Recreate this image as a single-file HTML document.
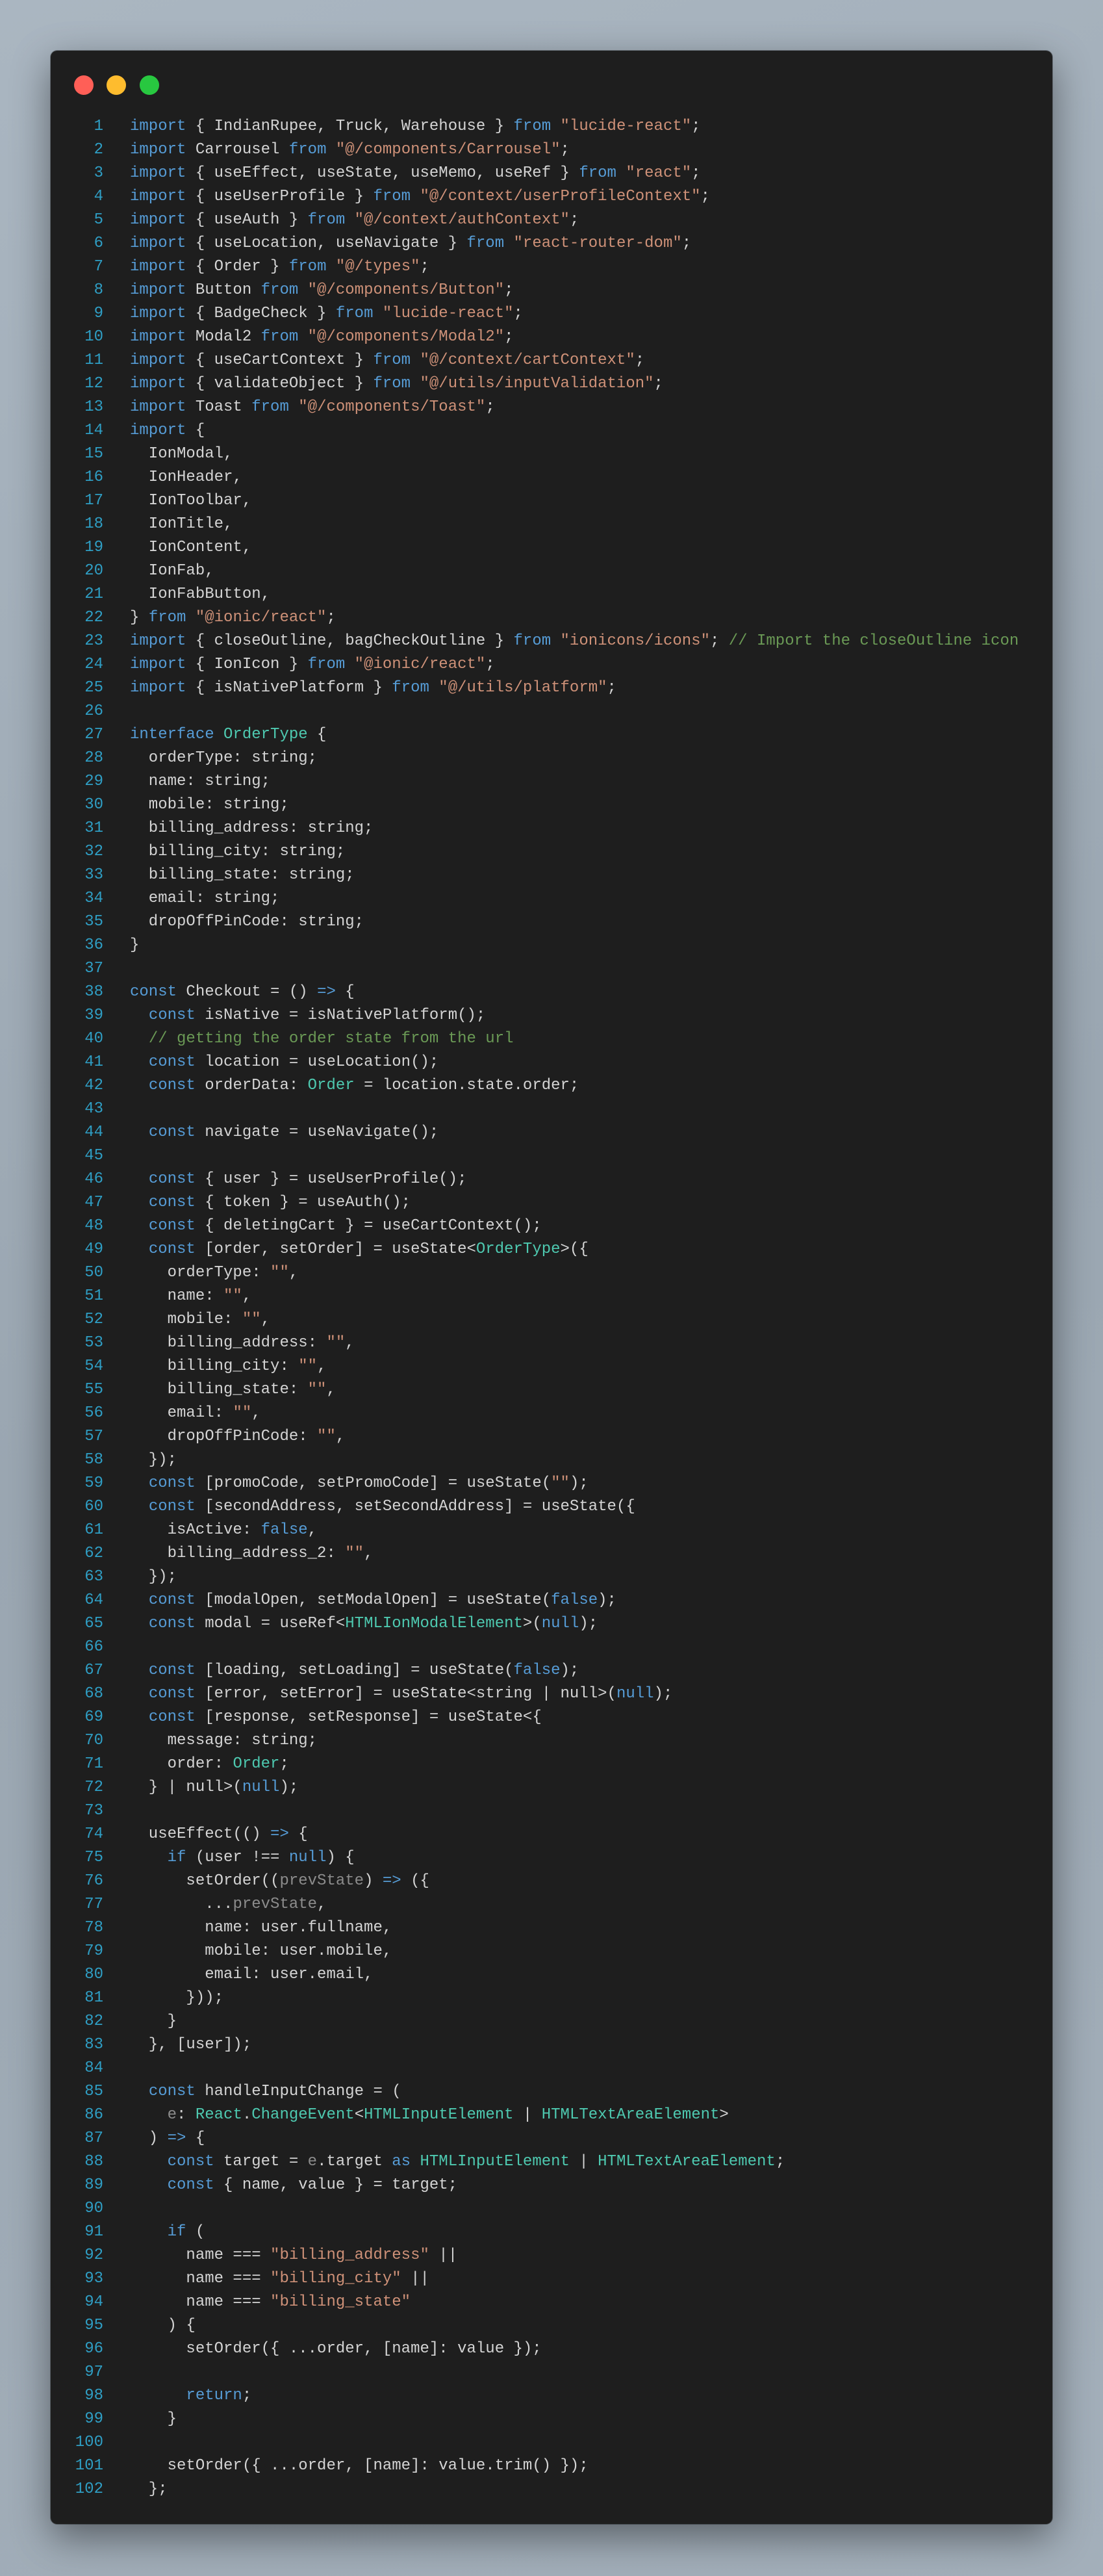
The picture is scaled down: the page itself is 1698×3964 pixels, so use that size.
<!DOCTYPE html>
<html><head><meta charset="utf-8">
<style>
html,body{margin:0;padding:0}
body{width:1698px;height:3964px;background:linear-gradient(160deg,#aab6c1 0%,#9aa6b1 50%,#a3afba 100%);position:relative;overflow:hidden}
.win{position:absolute;left:78px;top:78px;width:1542px;height:3806px;background:#1e1e1e;border-radius:10px;box-shadow:0 20px 60px rgba(0,0,0,0.45),0 0 0 1px rgba(0,0,0,0.3)}
.dot{position:absolute;top:116px;width:30px;height:30px;border-radius:50%}
.code{position:absolute;left:0;top:177px;font-family:"Liberation Mono",monospace;font-size:24px;line-height:36px;color:#d4d4d4}
.l{height:36px;white-space:pre}
.n{display:inline-block;width:159px;text-align:right;color:#2f9ec4;margin-right:41px}
.k{color:#569cd6}.s{color:#ce9178}.c{color:#6a9955}.t{color:#4ec9b0}.p{color:#8c8c8c}
</style></head><body>
<div class="win"></div>
<div class="dot" style="left:114px;background:#ff5f57"></div>
<div class="dot" style="left:164px;background:#febc2e"></div>
<div class="dot" style="left:215px;background:#28c840"></div>
<div class="code">
<div class="l"><span class="n">1</span><span class="k">import</span> { IndianRupee, Truck, Warehouse } <span class="k">from</span> <span class="s">"lucide-react"</span>;</div>
<div class="l"><span class="n">2</span><span class="k">import</span> Carrousel <span class="k">from</span> <span class="s">"@/components/Carrousel"</span>;</div>
<div class="l"><span class="n">3</span><span class="k">import</span> { useEffect, useState, useMemo, useRef } <span class="k">from</span> <span class="s">"react"</span>;</div>
<div class="l"><span class="n">4</span><span class="k">import</span> { useUserProfile } <span class="k">from</span> <span class="s">"@/context/userProfileContext"</span>;</div>
<div class="l"><span class="n">5</span><span class="k">import</span> { useAuth } <span class="k">from</span> <span class="s">"@/context/authContext"</span>;</div>
<div class="l"><span class="n">6</span><span class="k">import</span> { useLocation, useNavigate } <span class="k">from</span> <span class="s">"react-router-dom"</span>;</div>
<div class="l"><span class="n">7</span><span class="k">import</span> { Order } <span class="k">from</span> <span class="s">"@/types"</span>;</div>
<div class="l"><span class="n">8</span><span class="k">import</span> Button <span class="k">from</span> <span class="s">"@/components/Button"</span>;</div>
<div class="l"><span class="n">9</span><span class="k">import</span> { BadgeCheck } <span class="k">from</span> <span class="s">"lucide-react"</span>;</div>
<div class="l"><span class="n">10</span><span class="k">import</span> Modal2 <span class="k">from</span> <span class="s">"@/components/Modal2"</span>;</div>
<div class="l"><span class="n">11</span><span class="k">import</span> { useCartContext } <span class="k">from</span> <span class="s">"@/context/cartContext"</span>;</div>
<div class="l"><span class="n">12</span><span class="k">import</span> { validateObject } <span class="k">from</span> <span class="s">"@/utils/inputValidation"</span>;</div>
<div class="l"><span class="n">13</span><span class="k">import</span> Toast <span class="k">from</span> <span class="s">"@/components/Toast"</span>;</div>
<div class="l"><span class="n">14</span><span class="k">import</span> {</div>
<div class="l"><span class="n">15</span>  IonModal,</div>
<div class="l"><span class="n">16</span>  IonHeader,</div>
<div class="l"><span class="n">17</span>  IonToolbar,</div>
<div class="l"><span class="n">18</span>  IonTitle,</div>
<div class="l"><span class="n">19</span>  IonContent,</div>
<div class="l"><span class="n">20</span>  IonFab,</div>
<div class="l"><span class="n">21</span>  IonFabButton,</div>
<div class="l"><span class="n">22</span>} <span class="k">from</span> <span class="s">"@ionic/react"</span>;</div>
<div class="l"><span class="n">23</span><span class="k">import</span> { closeOutline, bagCheckOutline } <span class="k">from</span> <span class="s">"ionicons/icons"</span>; <span class="c">// Import the closeOutline icon</span></div>
<div class="l"><span class="n">24</span><span class="k">import</span> { IonIcon } <span class="k">from</span> <span class="s">"@ionic/react"</span>;</div>
<div class="l"><span class="n">25</span><span class="k">import</span> { isNativePlatform } <span class="k">from</span> <span class="s">"@/utils/platform"</span>;</div>
<div class="l"><span class="n">26</span></div>
<div class="l"><span class="n">27</span><span class="k">interface</span> <span class="t">OrderType</span> {</div>
<div class="l"><span class="n">28</span>  orderType: string;</div>
<div class="l"><span class="n">29</span>  name: string;</div>
<div class="l"><span class="n">30</span>  mobile: string;</div>
<div class="l"><span class="n">31</span>  billing_address: string;</div>
<div class="l"><span class="n">32</span>  billing_city: string;</div>
<div class="l"><span class="n">33</span>  billing_state: string;</div>
<div class="l"><span class="n">34</span>  email: string;</div>
<div class="l"><span class="n">35</span>  dropOffPinCode: string;</div>
<div class="l"><span class="n">36</span>}</div>
<div class="l"><span class="n">37</span></div>
<div class="l"><span class="n">38</span><span class="k">const</span> Checkout = () <span class="k">=&gt;</span> {</div>
<div class="l"><span class="n">39</span>  <span class="k">const</span> isNative = isNativePlatform();</div>
<div class="l"><span class="n">40</span>  <span class="c">// getting the order state from the url</span></div>
<div class="l"><span class="n">41</span>  <span class="k">const</span> location = useLocation();</div>
<div class="l"><span class="n">42</span>  <span class="k">const</span> orderData: <span class="t">Order</span> = location.state.order;</div>
<div class="l"><span class="n">43</span></div>
<div class="l"><span class="n">44</span>  <span class="k">const</span> navigate = useNavigate();</div>
<div class="l"><span class="n">45</span></div>
<div class="l"><span class="n">46</span>  <span class="k">const</span> { user } = useUserProfile();</div>
<div class="l"><span class="n">47</span>  <span class="k">const</span> { token } = useAuth();</div>
<div class="l"><span class="n">48</span>  <span class="k">const</span> { deletingCart } = useCartContext();</div>
<div class="l"><span class="n">49</span>  <span class="k">const</span> [order, setOrder] = useState&lt;<span class="t">OrderType</span>&gt;({</div>
<div class="l"><span class="n">50</span>    orderType: <span class="s">""</span>,</div>
<div class="l"><span class="n">51</span>    name: <span class="s">""</span>,</div>
<div class="l"><span class="n">52</span>    mobile: <span class="s">""</span>,</div>
<div class="l"><span class="n">53</span>    billing_address: <span class="s">""</span>,</div>
<div class="l"><span class="n">54</span>    billing_city: <span class="s">""</span>,</div>
<div class="l"><span class="n">55</span>    billing_state: <span class="s">""</span>,</div>
<div class="l"><span class="n">56</span>    email: <span class="s">""</span>,</div>
<div class="l"><span class="n">57</span>    dropOffPinCode: <span class="s">""</span>,</div>
<div class="l"><span class="n">58</span>  });</div>
<div class="l"><span class="n">59</span>  <span class="k">const</span> [promoCode, setPromoCode] = useState(<span class="s">""</span>);</div>
<div class="l"><span class="n">60</span>  <span class="k">const</span> [secondAddress, setSecondAddress] = useState({</div>
<div class="l"><span class="n">61</span>    isActive: <span class="k">false</span>,</div>
<div class="l"><span class="n">62</span>    billing_address_2: <span class="s">""</span>,</div>
<div class="l"><span class="n">63</span>  });</div>
<div class="l"><span class="n">64</span>  <span class="k">const</span> [modalOpen, setModalOpen] = useState(<span class="k">false</span>);</div>
<div class="l"><span class="n">65</span>  <span class="k">const</span> modal = useRef&lt;<span class="t">HTMLIonModalElement</span>&gt;(<span class="k">null</span>);</div>
<div class="l"><span class="n">66</span></div>
<div class="l"><span class="n">67</span>  <span class="k">const</span> [loading, setLoading] = useState(<span class="k">false</span>);</div>
<div class="l"><span class="n">68</span>  <span class="k">const</span> [error, setError] = useState&lt;string | null&gt;(<span class="k">null</span>);</div>
<div class="l"><span class="n">69</span>  <span class="k">const</span> [response, setResponse] = useState&lt;{</div>
<div class="l"><span class="n">70</span>    message: string;</div>
<div class="l"><span class="n">71</span>    order: <span class="t">Order</span>;</div>
<div class="l"><span class="n">72</span>  } | null&gt;(<span class="k">null</span>);</div>
<div class="l"><span class="n">73</span></div>
<div class="l"><span class="n">74</span>  useEffect(() <span class="k">=&gt;</span> {</div>
<div class="l"><span class="n">75</span>    <span class="k">if</span> (user !== <span class="k">null</span>) {</div>
<div class="l"><span class="n">76</span>      setOrder((<span class="p">prevState</span>) <span class="k">=&gt;</span> ({</div>
<div class="l"><span class="n">77</span>        ...<span class="p">prevState</span>,</div>
<div class="l"><span class="n">78</span>        name: user.fullname,</div>
<div class="l"><span class="n">79</span>        mobile: user.mobile,</div>
<div class="l"><span class="n">80</span>        email: user.email,</div>
<div class="l"><span class="n">81</span>      }));</div>
<div class="l"><span class="n">82</span>    }</div>
<div class="l"><span class="n">83</span>  }, [user]);</div>
<div class="l"><span class="n">84</span></div>
<div class="l"><span class="n">85</span>  <span class="k">const</span> handleInputChange = (</div>
<div class="l"><span class="n">86</span>    <span class="p">e</span>: <span class="t">React</span>.<span class="t">ChangeEvent</span>&lt;<span class="t">HTMLInputElement</span> | <span class="t">HTMLTextAreaElement</span>&gt;</div>
<div class="l"><span class="n">87</span>  ) <span class="k">=&gt;</span> {</div>
<div class="l"><span class="n">88</span>    <span class="k">const</span> target = <span class="p">e</span>.target <span class="k">as</span> <span class="t">HTMLInputElement</span> | <span class="t">HTMLTextAreaElement</span>;</div>
<div class="l"><span class="n">89</span>    <span class="k">const</span> { name, value } = target;</div>
<div class="l"><span class="n">90</span></div>
<div class="l"><span class="n">91</span>    <span class="k">if</span> (</div>
<div class="l"><span class="n">92</span>      name === <span class="s">"billing_address"</span> ||</div>
<div class="l"><span class="n">93</span>      name === <span class="s">"billing_city"</span> ||</div>
<div class="l"><span class="n">94</span>      name === <span class="s">"billing_state"</span></div>
<div class="l"><span class="n">95</span>    ) {</div>
<div class="l"><span class="n">96</span>      setOrder({ ...order, [name]: value });</div>
<div class="l"><span class="n">97</span></div>
<div class="l"><span class="n">98</span>      <span class="k">return</span>;</div>
<div class="l"><span class="n">99</span>    }</div>
<div class="l"><span class="n">100</span></div>
<div class="l"><span class="n">101</span>    setOrder({ ...order, [name]: value.trim() });</div>
<div class="l"><span class="n">102</span>  };</div>
</div>
</body></html>
